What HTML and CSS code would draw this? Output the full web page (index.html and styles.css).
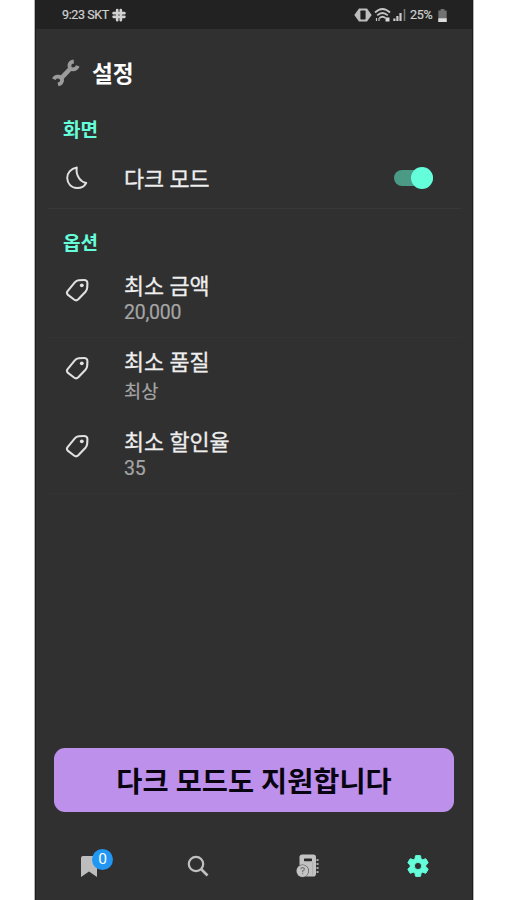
FILE: index.html
```html
<!DOCTYPE html>
<html lang="ko">
<head>
<meta charset="utf-8">
<title>설정</title>
<link rel="stylesheet" href="styles.css">
</head>
<body>
<svg width="0" height="0" class="defs">
  <symbol id="tag" viewBox="0 0 24 24"><path d="M2.8 12.8 9.8 4.4Q11.4 2.5 13.8 2.3L18.8 2Q22.4 1.9 22.4 5.2L22.2 9.6Q22 12 20.5 13.7L13.3 21.3Q11.2 23.2 9 21.5L3 16.9Q1 15 2.8 12.8Z" fill="none" stroke="currentColor" stroke-width="2.1" stroke-linejoin="round"/><circle cx="16.8" cy="7.3" r="1.9" fill="currentColor"/></symbol>
</svg>
<main class="phone">
  <header class="status">
    <div class="status-left">
      <span class="status-text">9:23 SKT</span>
      <svg width="14" height="14" viewBox="0 0 14 14" fill="none" stroke="#d2d2d2" stroke-width="2.7" stroke-linecap="round"><path d="M5.2 2v2.8M5.2 7.5v4.7M1.6 8.8h3.6M1.6 5.2h5M8.8 2v4.6M8.8 9.5v2.7M8.8 5.2h3.6M7.5 8.8h4.9"/></svg>
    </div>
    <div class="status-right">
      <svg class="vibrate" width="18" height="14" viewBox="0 0 18 14"><path d="M5 .5h8l4.7 6.5-4.7 6.5H5L.3 7Z" fill="#bdbdbd"/><rect x="6.4" y="2.5" width="5.2" height="9" rx=".8" fill="#202020"/></svg>
      <svg class="wifi" width="17" height="14" viewBox="0 0 17 14" fill="none" stroke="#c4c4c4" stroke-width="1.8"><path d="M1 4.5q7.5-7 15 0M3.2 7.4q5.3-4.8 10.6 0M5.4 10.2q3.1-2.8 6.2 0"/><path d="M2.5 10v3M5 10v3" stroke-width="1.2"/><path d="M11.5 9.5h4v4h-4z" fill="#d8d8d8" stroke="none"/></svg>
      <svg class="signal" width="13" height="14" viewBox="0 0 13 14" stroke-width="2.2"><path d="M1.4 10.5V13M4.4 8V13M7.5 5V13" stroke="#cacaca"/><path d="M11.5 1v12" stroke="#777" stroke-width="1.6"/></svg>
      <span class="status-text percent">25%</span>
      <svg class="battery" width="9" height="13" viewBox="0 0 9 14"><path d="M2.5 0h4v1.5H9V14H0V1.5h2.5Z" fill="#727272"/><path d="M0 10h9v4H0z" fill="#ddd"/></svg>
    </div>
  </header>
  <div class="title">
    <svg width="28" height="28" viewBox="0 0 28 28" fill="none" stroke="#9b9b9b"><path d="M9 19.3 19 9" stroke-width="4.6"/><path d="M21.8 2.5Q17 3 17.5 7.3Q18.2 10.6 21.5 10.4Q24.7 10 25.8 6.9M1.9 20.2Q3.2 17.2 6.6 17.7Q10 18.4 10.1 21.2Q10 24.5 6 25.5" stroke-width="3.8"/></svg>
    <h1>설정</h1>
  </div>
  <section class="group">
    <h2>화면</h2>
    <div class="row dark-row">
      <svg class="icon moon" width="24" height="24" viewBox="0 0 24 24" fill="none" stroke="#e0e0e0" stroke-width="2" stroke-linejoin="round"><path d="M11.8 1.5C5.6 2.6 2.1 7 2.2 12.1c.2 5.7 4.2 9.8 9.7 9.9 4.1.1 7.5-1.8 9.3-5.1-3-.5-5.4-2-7.1-4.6-2-3.1-3.1-7-2.3-10.8Z"/></svg>
      <div class="label">다크 모드</div>
      <div class="switch"><span class="knob"></span></div>
    </div>
  </section>
  <section class="group options">
    <h2>옵션</h2>
    <div class="row amount"><svg class="icon"><use href="#tag"/></svg><div class="copy"><div class="label">최소 금액</div><div class="value">20,000</div></div></div>
    <div class="row quality"><svg class="icon"><use href="#tag"/></svg><div class="copy"><div class="label">최소 품질</div><div class="value korean">최상</div></div></div>
    <div class="row discount"><svg class="icon"><use href="#tag"/></svg><div class="copy"><div class="label">최소 할인율</div><div class="value">35</div></div></div>
  </section>
  <div class="banner">다크 모드도 지원합니다</div>
  <nav>
    <div class="tab bookmark">
      <svg width="16" height="21" viewBox="0 0 16 21"><path d="M0 2Q0 0 2 0h12q2 0 2 2v19l-8-5.5L0 21Z" fill="#bdbdbd"/></svg>
      <span class="badge">0</span>
    </div>
    <div class="tab"><svg width="22" height="22" viewBox="0 0 22 22" fill="none" stroke="#c0c0c0"><circle cx="9" cy="9" r="7.2" stroke-width="2.2"/><path d="m14 14 6.5 6.5" stroke-width="2.7"/></svg></div>
    <div class="tab"><svg width="24" height="26" viewBox="0 0 24 26"><rect x="3.5" y="1.5" width="16.5" height="22" rx="2.8" fill="#c2c2c2"/><rect x="8" y="5.5" width="8" height="2.7" rx=".6" fill="#292929"/><path d="M16.7 9v13" stroke="#adadad"/><path d="M20.5 7h2M20.5 11h2M20.5 15h2M20.5 19h2" stroke="#aaa" stroke-width="2"/><circle cx="6.5" cy="18" r="6.5" fill="#505050"/><circle cx="6.5" cy="18" r="5.9" fill="#c4c4c4"/><path d="M4.8 16.3q0-1.6 1.8-1.6t1.8 1.5q0 1-1.8 1.8v1.2m0 1v1" fill="none" stroke="#777" stroke-width="1.2"/></svg></div>
    <div class="tab"><svg width="24" height="24" viewBox="1 1 22 22"><path fill="#64ffda" stroke="#64ffda" stroke-width=".8" stroke-linejoin="round" fill-rule="evenodd" d="M19.14 12.94c.04-.3.06-.61.06-.94s-.02-.64-.07-.94l2.03-1.58a.49.49 0 0 0 .12-.61l-1.92-3.32a.49.49 0 0 0-.59-.22l-2.39.96a7.03 7.03 0 0 0-1.62-.94L14.4 2.8a.48.48 0 0 0-.48-.4h-3.84a.48.48 0 0 0-.47.41l-.36 2.54c-.59.24-1.13.57-1.62.94l-2.39-.96a.48.48 0 0 0-.59.22L2.74 8.87a.48.48 0 0 0 .12.61l2.03 1.58a6 6 0 0 0 0 1.88l-2.03 1.58a.49.49 0 0 0-.12.61l1.92 3.32c.12.22.37.29.59.22l2.39-.96c.5.38 1.03.7 1.62.94l.36 2.54c.05.24.24.41.48.41h3.84c.24 0 .44-.17.47-.41l.36-2.54a7.03 7.03 0 0 0 1.62-.94l2.39.96c.22.08.47 0 .59-.22l1.92-3.32a.48.48 0 0 0-.12-.61zM12 15.3a3.3 3.3 0 1 1 0-6.6 3.3 3.3 0 0 1 0 6.6Z"/></svg></div>
  </nav>
</main>
</body>
</html>
```
FILE: styles.css
```css
* { box-sizing: border-box; }
body {
  margin: 0;
  width: 506px;
  height: 900px;
  overflow: hidden;
  background: #fff;
  font-family: Roboto, "Noto Sans CJK KR", sans-serif;
}
svg { display: block; flex: none; }
.defs { position: absolute; }
h1, h2 { margin: 0; }
.phone {
  width: 438px;
  height: 900px;
  margin-left: 35px;
  display: flex;
  flex-direction: column;
  background: #303030;
  border-left: 1px solid #1c1c1c;
  border-right: 1px solid #1c1c1c;
  box-shadow: 0 0 0 1px #b5b5b5;
}
.status {
  height: 29px;
  flex: none;
  padding: 0 25px 0 26px;
  display: flex;
  justify-content: space-between;
  background: #222;
}
.status-left, .status-right { display: flex; align-items: center; height: 30px; }
.status-left { gap: 1px; }
.status-text { color: #d0d0d0; font-size: 12.5px; line-height: 16px; letter-spacing: -.4px; -webkit-text-stroke: .2px currentColor; }
.status-left .status-text { width: 49px; white-space: nowrap; }
.wifi { margin-left: 2px; }
.signal { margin-left: 2px; }
.percent { margin-left: 4px; width: 24px; letter-spacing: -.3px; }
.battery { margin-left: 4px; }
.title { height: 86px; flex: none; display: flex; align-items: center; padding: 2px 0 0 16px; }
.title h1 { margin: 3px 0 0 12px; color: #fff; font-size: 22.7px; line-height: 32px; font-weight: 700; }
.group { flex: none; height: 94px; }
h2 { height: 28px; padding: 2px 0 0 27px; color: #64ffda; font-size: 19px; line-height: 28px; font-weight: 700; }
.row { display: flex; margin: 0 11px 0 12px; padding-left: 17px; }
.icon { width: 24px; height: 24px; color: #e0e0e0; }
.label { color: #eee; font-size: 21.8px; line-height: 28px; white-space: nowrap; -webkit-text-stroke: .3px currentColor; }
.row > .label, .copy { margin-left: 35px; }
.dark-row { height: 66px; align-items: center; padding-top: 4px; padding-right: 28px; border-bottom: 1px solid #383838; }
.dark-row .label { padding-top: 5px; }
.switch {
  margin-left: auto;
  width: 39px;
  height: 16px;
  display: flex;
  justify-content: flex-end;
  align-items: center;
  background: #4a9a86;
  border-radius: 8px;
}
.knob { width: 22px; height: 22px; flex: none; border-radius: 50%; background: #64ffda; }
.options { height: 286px; padding-top: 19px; }
.value { color: #a5a5a5; font-size: 19.5px; line-height: 24px; letter-spacing: -.25px; -webkit-text-stroke: .2px currentColor; }
.amount { height: 82px; padding-top: 17px; border-bottom: 1px solid #333; }
.amount .icon { margin-top: 5px; }
.quality { height: 78px; padding-top: 11px; }
.quality .icon { margin-top: 7px; }
.korean { font-size: 18.7px; line-height: 30px; letter-spacing: 0; }
.discount { height: 78px; padding-top: 13px; border-bottom: 1px solid #333; }
.discount .icon { margin-top: 5px; }
.banner {
  width: 400px;
  height: 64px;
  margin: auto 0 0 18px;
  padding-top: 2px;
  flex: none;
  border-radius: 11px;
  background: #bd90eb;
  color: #090510;
  font-size: 28.4px;
  font-weight: 700;
  line-height: 66px;
  text-align: center;
}
nav {
  flex: none;
  height: 88px;
  display: grid;
  grid-template-columns: repeat(4, 110px);
  padding-top: 20px;
  margin: 0 -1px 0 -3px;
}
.tab { height: 68px; display: flex; justify-content: center; align-items: center; }
.bookmark { position: relative; padding: 0 0 0 2px; }
.badge {
  position: absolute;
  left: 59px;
  top: 17px;
  width: 21px;
  height: 21px;
  border-radius: 50%;
  background: #2196f3;
  color: #fff;
  font-size: 15.5px;
  line-height: 21px;
  text-align: center;
}
```
